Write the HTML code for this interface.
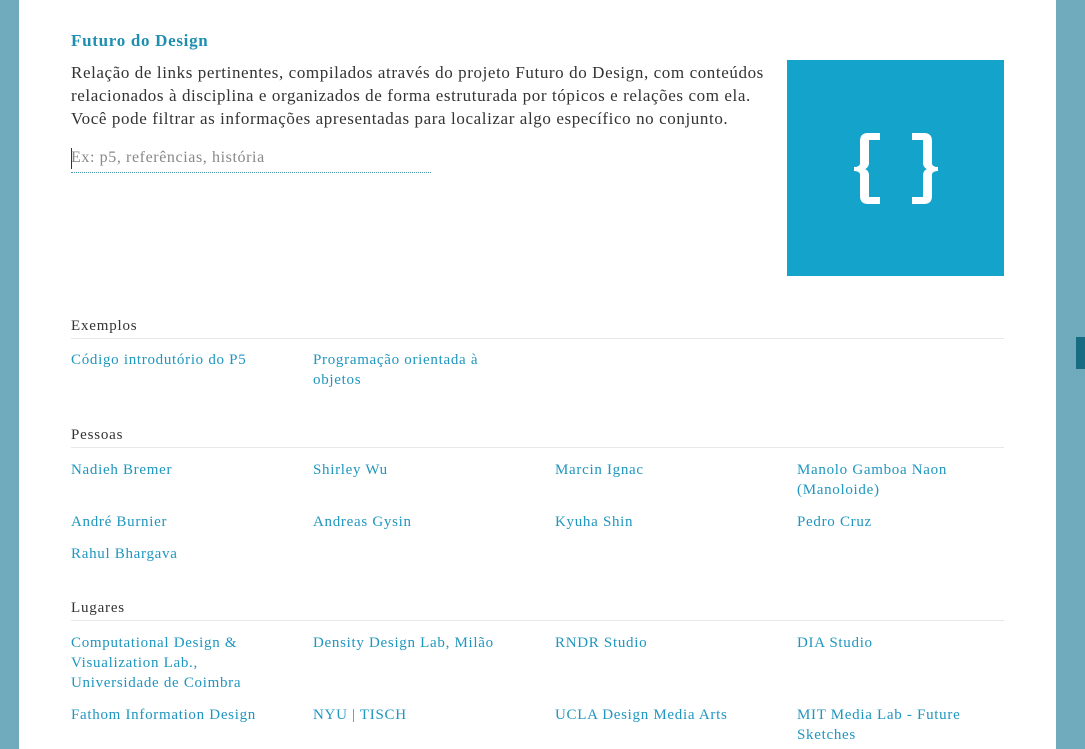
<!DOCTYPE html>
<html><head><meta charset="utf-8"><style>
html,body{margin:0;padding:0;width:1085px;height:749px;overflow:hidden;background:#6faabd;}
.page{position:absolute;left:19px;top:0;width:1037px;height:749px;background:#fff;}
body{font-family:"Liberation Serif",serif;color:#333;}
.thumb{position:absolute;left:1076px;top:337px;width:9px;height:32px;background:#176b82;}
h1{position:absolute;left:52px;top:31px;margin:0;font-size:17px;font-weight:bold;color:#1f8fb0;letter-spacing:0.7px;}
.intro{position:absolute;left:52px;top:61px;margin:0;font-size:17px;line-height:23px;color:#333;letter-spacing:0.6px;white-space:nowrap;}
.search{position:absolute;left:52px;top:147px;width:360px;height:26px;border-bottom:1px dotted #4a9ab0;font-size:16px;color:#888;letter-spacing:0.6px;padding-top:2px;box-sizing:border-box;}
.search:before{content:"";position:absolute;left:0;top:1px;width:1px;height:21px;background:#333;}
.img{position:absolute;left:768px;top:60px;width:217px;height:216px;background:#13a3cb;}
.sec{position:absolute;left:52px;width:933px;}
.sec .h{font-size:15px;color:#333;border-bottom:1px solid #e8e8e8;padding-bottom:2px;height:18px;letter-spacing:0.8px;}
.grid{position:relative;}
.grid a{position:absolute;width:205px;font-size:15px;line-height:20px;color:#1f96bf;text-decoration:none;letter-spacing:0.7px;}
</style></head><body>
<div class="page">
<h1>Futuro do Design</h1>
<p class="intro">Relação de links pertinentes, compilados através do projeto Futuro do Design, com conteúdos<br>relacionados à disciplina e organizados de forma estruturada por tópicos e relações com ela.<br>Você pode filtrar as informações apresentadas para localizar algo específico no conjunto.</p>
<div class="search">Ex: p5, referências, história</div>
<div class="img"><svg width="217" height="216" viewBox="0 0 217 216">
<path d="M93 73H81Q73 73 73 81V104Q72 107 67 107V111Q72 111 73 114V136Q73 144 81 144H93V137H82V114Q81 110 78 109Q81 108 82 104V80H93Z" fill="#fff"/>
<path d="M125 73H137Q145 73 145 81V104Q146 107 151 107V111Q146 111 145 114V136Q145 144 137 144H125V137H136V114Q137 110 140 109Q137 108 136 104V80H125Z" fill="#fff"/>
</svg></div>

<div class="sec" style="top:318px"><div class="h">Exemplos</div>
<div class="grid"><a style="left:0;top:11px">Código introdutório do P5</a><a style="left:242px;top:11px">Programação orientada à objetos</a></div></div>

<div class="sec" style="top:427px"><div class="h">Pessoas</div>
<div class="grid">
<a style="left:0;top:12px">Nadieh Bremer</a><a style="left:242px;top:12px">Shirley Wu</a><a style="left:484px;top:12px">Marcin Ignac</a><a style="left:726px;top:12px">Manolo Gamboa Naon (Manoloide)</a>
<a style="left:0;top:64px">André Burnier</a><a style="left:242px;top:64px">Andreas Gysin</a><a style="left:484px;top:64px">Kyuha Shin</a><a style="left:726px;top:64px">Pedro Cruz</a>
<a style="left:0;top:96px">Rahul Bhargava</a></div></div>

<div class="sec" style="top:600px"><div class="h">Lugares</div>
<div class="grid">
<a style="left:0;top:12px">Computational Design &amp; Visualization Lab., Universidade de Coimbra</a><a style="left:242px;top:12px">Density Design Lab, Milão</a><a style="left:484px;top:12px">RNDR Studio</a><a style="left:726px;top:12px">DIA Studio</a>
<a style="left:0;top:84px">Fathom Information Design</a><a style="left:242px;top:84px">NYU | TISCH</a><a style="left:484px;top:84px">UCLA Design Media Arts</a><a style="left:726px;top:84px">MIT Media Lab - Future Sketches</a>
</div></div>
</div>
<div class="thumb"></div>
</body></html>
